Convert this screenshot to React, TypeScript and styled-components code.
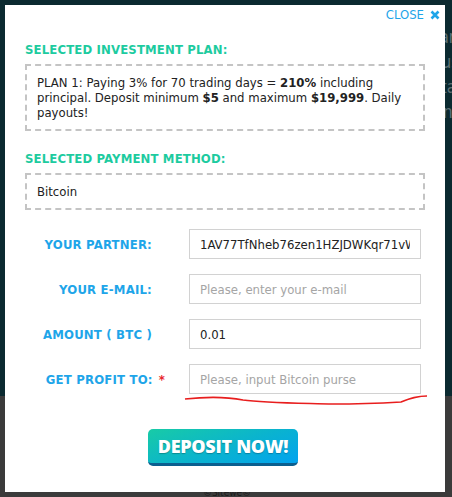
import React from "react";
import styled, { createGlobalStyle } from "styled-components";

const GlobalStyle = createGlobalStyle`
  html, body {
    margin: 0;
    padding: 0;
    background: #0b2a30;
  }
  * {
    box-sizing: border-box;
  }
`;

const Page = styled.div`
  position: relative;
  width: 452px;
  height: 497px;
  overflow: hidden;
  display: flex;
  flex-direction: column;
  font-family: "DejaVu Sans Condensed", "DejaVu Sans", sans-serif;
`;

const PageTop = styled.div`
  height: 396px;
  background: #0b2a30;
  padding: 28px 0 0 431px;
  display: flex;
  flex-direction: column;
  gap: 6px;
`;

const PageLine = styled.div`
  color: #5d7074;
  font-size: 17px;
  line-height: 19px;
  white-space: nowrap;
`;

const PageBottom = styled.div`
  flex: 1;
  background: #3b3b3b;
  display: flex;
  align-items: flex-end;
  justify-content: center;
`;

const Copyright = styled.div`
  font-size: 10px;
  color: #1c1c1c;
  line-height: 8px;
  margin-left: 2px;
`;

const Modal = styled.div`
  position: absolute;
  left: 5px;
  top: 5px;
  width: 440px;
  height: 487px;
  background: #fff;
  padding: 1px 20px 0 20px;
  display: flex;
  flex-direction: column;
`;

const CloseRow = styled.div`
  display: flex;
  justify-content: flex-end;
  margin-right: -15px;
`;

const CloseButton = styled.button`
  border: 0;
  background: transparent;
  padding: 0;
  display: flex;
  align-items: center;
  gap: 6px;
  color: #1ea5e9;
  font-family: "DejaVu Sans Condensed", "DejaVu Sans", sans-serif;
  font-size: 13px;
  line-height: 18px;
  cursor: pointer;
`;

const SectionTitle = styled.div<{ $top: number }>`
  margin-top: ${(p) => p.$top}px;
  color: #1dcb9f;
  font-weight: bold;
  font-size: 13px;
  line-height: 16px;
  letter-spacing: 0.15px;
`;

const DashedBox = styled.div`
  margin-top: 6px;
  border: 2px dashed #c4c4c4;
  padding: 9px 10px;
  color: #222;
  font-size: 13px;
  line-height: 15px;

  b {
    line-height: 15px;
  }
`;

const Form = styled.div`
  margin-top: 19px;
  display: flex;
  flex-direction: column;
  gap: 15px;
  position: relative;
`;

const Row = styled.div`
  display: grid;
  grid-template-columns: 127px 232px;
  column-gap: 37px;
  align-items: center;
`;

const Label = styled.label`
  text-align: right;
  color: #1ea5e9;
  font-weight: bold;
  font-size: 13px;
  letter-spacing: 0.2px;
  white-space: nowrap;
`;

const Required = styled.span`
  color: #e8262c;
  margin-left: 6px;
  margin-right: -13px;
`;

const Field = styled.input`
  height: 30px;
  width: 232px;
  border: 1px solid #d2d2d2;
  background: #fff;
  padding: 0 10px;
  font-family: "DejaVu Sans Condensed", "DejaVu Sans", sans-serif;
  font-size: 13px;
  color: #222;
  outline: none;
  &::placeholder {
    color: #a5a5a5;
  }
`;

const Scribble = styled.svg`
  position: absolute;
  left: 158px;
  top: 163px;
  pointer-events: none;
`;

const ButtonRow = styled.div`
  margin-top: 35px;
  display: flex;
  justify-content: center;
  padding-right: 4px;
`;

const DepositButton = styled.button`
  width: 150px;
  height: 37px;
  border: 0;
  border-bottom: 3px solid #0b5f8f;
  border-radius: 5px;
  background: linear-gradient(160deg, #18cba6 0%, #0ab3cf 55%, #02a3ef 100%);
  color: #fff;
  font-family: "Open Sans", "DejaVu Sans", sans-serif;
  font-weight: 800;
  font-size: 18px;
  letter-spacing: -0.3px;
  text-shadow: 0 1px 1px rgba(0, 0, 0, 0.25);
  cursor: pointer;
  padding: 0;
`;

const CloseIcon = () => (
  <svg width="10" height="10" viewBox="0 0 10 10">
    <path d="M1.5 1.5 L8.5 8.5 M8.5 1.5 L1.5 8.5" stroke="#1ea5e9" strokeWidth="2.6" />
  </svg>
);

export default function App() {
  return (
    <>
      <GlobalStyle />
      <Page>
        <PageTop>
          <PageLine>Par</PageLine>
          <PageLine>Bus</PageLine>
          <PageLine>Sta</PageLine>
          <PageLine>One</PageLine>
        </PageTop>
        <PageBottom>
          <Copyright>©Sitewe©</Copyright>
        </PageBottom>
        <Modal>
          <CloseRow>
            <CloseButton>
              CLOSE <CloseIcon />
            </CloseButton>
          </CloseRow>
          <SectionTitle $top={18}>SELECTED INVESTMENT PLAN:</SectionTitle>
          <DashedBox>
            PLAN 1: Paying 3% for 70 trading days = <b>210%</b> including principal. Deposit minimum{" "}
            <b>$5</b> and maximum <b>$19,999</b>. Daily payouts!
          </DashedBox>
          <SectionTitle $top={20}>SELECTED PAYMENT METHOD:</SectionTitle>
          <DashedBox>Bitcoin</DashedBox>
          <Form>
            <Row>
              <Label>YOUR PARTNER:</Label>
              <Field readOnly value="1AV77TfNheb76zen1HZJDWKqr71vWZz" />
            </Row>
            <Row>
              <Label>YOUR E-MAIL:</Label>
              <Field placeholder="Please, enter your e-mail" />
            </Row>
            <Row>
              <Label>AMOUNT ( BTC )</Label>
              <Field defaultValue="0.01" />
            </Row>
            <Row>
              <Label>
                GET PROFIT TO:<Required>*</Required>
              </Label>
              <Field placeholder="Please, input Bitcoin purse" />
            </Row>
            <Scribble width="246" height="16" viewBox="0 0 246 16">
              <path
                d="M2 7 C 20 5, 40 4, 60 8 C 80 11, 110 11, 150 12 C 180 12, 200 11, 218 10 C 228 6, 234 4, 244 4"
                fill="none"
                stroke="#e81e1e"
                strokeWidth="1.7"
              />
            </Scribble>
          </Form>
          <ButtonRow>
            <DepositButton>DEPOSIT NOW!</DepositButton>
          </ButtonRow>
        </Modal>
      </Page>
    </>
  );
}
